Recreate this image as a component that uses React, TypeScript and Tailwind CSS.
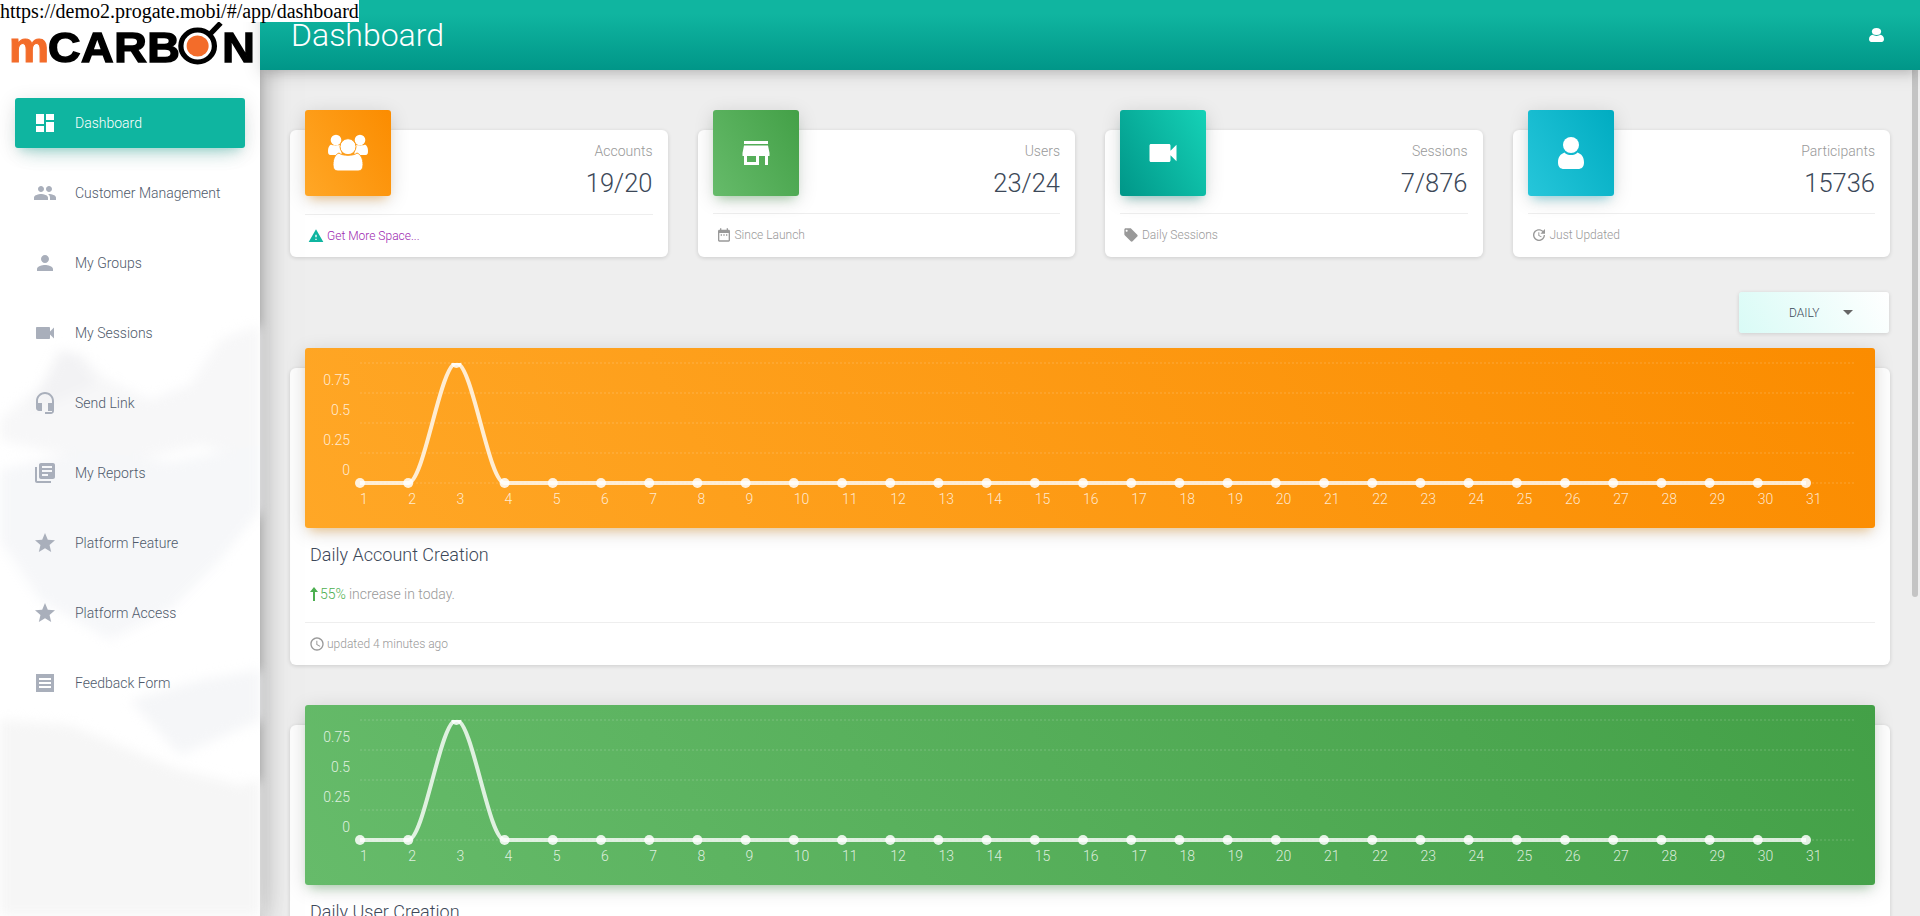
import type { ReactNode } from "react";

const mi = {
  dashboard: "M3 13h8V3H3v10zm0 8h8v-6H3v6zm10 0h8V11h-8v10zm0-18v6h8V3h-8z",
  people:
    "M16 11c1.66 0 2.99-1.34 2.99-3S17.66 5 16 5c-1.66 0-3 1.34-3 3s1.34 3 3 3zm-8 0c1.66 0 2.99-1.34 2.99-3S9.66 5 8 5C6.34 5 5 6.34 5 8s1.34 3 3 3zm0 2c-2.33 0-7 1.17-7 3.5V19h14v-2.5c0-2.33-4.67-3.5-7-3.5zm8 0c-.29 0-.62.02-.97.05 1.16.84 1.97 1.97 1.97 3.45V19h6v-2.5c0-2.33-4.67-3.5-7-3.5z",
  person:
    "M12 12c2.21 0 4-1.79 4-4s-1.79-4-4-4-4 1.79-4 4 1.79 4 4 4zm0 2c-2.67 0-8 1.34-8 4v2h16v-2c0-2.66-5.33-4-8-4z",
  video:
    "M17 10.5V7c0-.55-.45-1-1-1H4c-.55 0-1 .45-1 1v10c0 .55.45 1 1 1h12c.55 0 1-.45 1-1v-3.5l4 4v-11l-4 4z",
  headset:
    "M12 1c-4.97 0-9 4.03-9 9v7c0 1.66 1.34 3 3 3h3v-8H5v-2c0-3.87 3.13-7 7-7s7 3.13 7 7v2h-4v8h4v1h-7v2h6c1.66 0 3-1.34 3-3V10c0-4.97-4.03-9-9-9z",
  library:
    "M4 6H2v14c0 1.1.9 2 2 2h14v-2H4V6zm16-4H8c-1.1 0-2 .9-2 2v12c0 1.1.9 2 2 2h12c1.1 0 2-.9 2-2V4c0-1.1-.9-2-2-2zm-1 9H9V9h10v2zm-4 4H9v-2h6v2zm4-8H9V5h10v2z",
  star: "M12 17.27L18.18 21l-1.64-7.03L22 9.24l-7.19-.61L12 2 9.19 8.63 2 9.24l5.46 4.73L5.82 21z",
  form: "M3 3h18v18H3V3zm3 4v2h12V7H6zm0 4v2h12v-2H6zm0 4v2h12v-2H6z",
  store:
    "M20 4H4v2h16V4zm1 10v-2l-1-5H4l-1 5v2h1v6h10v-6h4v6h2v-6h1zm-9 4H6v-4h6v4z",
  calendar:
    "M9 11H7v2h2v-2zm4 0h-2v2h2v-2zm4 0h-2v2h2v-2zm2-7h-1V2h-2v2H8V2H6v2H5c-1.11 0-1.99.9-1.99 2L3 20c0 1.1.89 2 2 2h14c1.1 0 2-.9 2-2V6c0-1.1-.9-2-2-2zm0 16H5V9h14v11z",
  tag: "M21.41 11.58l-9-9C12.05 2.22 11.55 2 11 2H4c-1.1 0-2 .9-2 2v7c0 .55.22 1.05.59 1.42l9 9c.36.36.86.58 1.41.58.55 0 1.05-.22 1.41-.59l7-7c.37-.36.59-.86.59-1.41 0-.55-.23-1.06-.59-1.42zM5.5 7C4.67 7 4 6.33 4 5.5S4.67 4 5.5 4 7 4.67 7 5.5 6.33 7 5.5 7z",
  update:
    "M21 10.12h-6.78l2.74-2.82c-2.73-2.7-7.15-2.8-9.88-.1-2.73 2.71-2.73 7.08 0 9.79s7.15 2.71 9.88 0C18.32 15.65 19 14.08 19 12.1h2c0 1.98-.88 4.55-2.64 6.29-3.51 3.48-9.21 3.48-12.72 0-3.5-3.47-3.53-9.11-.02-12.58s9.14-3.47 12.65 0L21 3v7.12zM12.5 8v4.25l3.5 2.08-.72 1.21L11 13V8h1.5z",
  warning: "M1 21h22L12 2 1 21zm12-3h-2v-2h2v2zm0-4h-2v-4h2v4z",
  clock:
    "M11.99 2C6.47 2 2 6.48 2 12s4.47 10 9.99 10C17.52 22 22 17.52 22 12S17.52 2 11.99 2zM12 20c-4.42 0-8-3.58-8-8s3.58-8 8-8 8 3.58 8 8-3.58 8-8 8zm.5-13H11v6l5.25 3.15.75-1.23-4.5-2.67z",
};

function Mi({ d, className }: { d: string; className?: string }) {
  return (
    <svg viewBox="0 0 24 24" fill="currentColor" fillRule="evenodd" className={className}>
      <path d={d} />
    </svg>
  );
}

/** Glyph-style person, used in the header and on the Participants tile. */
function BustIcon({ className }: { className?: string }) {
  return (
    <svg viewBox="0 0 26 32" preserveAspectRatio="none" fill="currentColor" className={className}>
      <ellipse cx="13" cy="8" rx="8" ry="8" />
      <path d="M6.5 15.5c1.6 1.8 3.9 2.6 6.5 2.6s4.900-.8 6.500-2.600C23.500 17 26 20 26 25.500 26 30 23.500 32 20 32H6C2.500 32 0 30 0 25.500 0 20 2.500 17 6.500 15.500z" />
    </svg>
  );
}

function GroupIcon({ className }: { className?: string }) {
  return (
    <svg viewBox="0 0 40 40" fill="#fff" className={className}>
      <circle cx="8" cy="7" r="5.300" />
      <circle cx="32" cy="7" r="5.300" />
      <path d="M3 11.500c1.500 1.200 8 1.200 9 0L14 22H2.500C.5 22 0 20.500 0 18c0-3 1-5.500 3-6.500z" />
      <path d="M37 11.500c-1.500 1.200-8 1.200-9 0L26 22h11.500c2 0 2.500-1.500 2.500-4 0-3-1-5.500-3-6.500z" />
      <path d="M11 20c3 3 15 3 18 0 4 1.500 6 6 6 11.500 0 4.500-2 6.500-5 6.500H10c-3 0-5-2-5-6.500C5 26 7 21.500 11 20z" stroke="#fe9b14" />
      <circle cx="20" cy="13.700" r="8" stroke="#fe9b14" />
    </svg>
  );
}

function SidebarBackdrop() {
  return (
    <svg
      viewBox="0 0 260 916"
      preserveAspectRatio="none"
      className="absolute inset-0 h-full w-full blur-[6px]"
    >
      <path d="M0 420 60 370 80 352 105 378 150 400 190 385 220 340 260 325V460L200 445 110 465 0 440z" fill="#f7f7f8" />
      <path d="M60 350 78 355 95 385 60 400 30 410z" fill="#f2f2f4" />
      <path d="M0 470 90 450 170 462 260 445V510L220 560 170 610 110 640 40 600 0 540z" fill="#f6f7f9" />
      <path d="M130 700 180 755 260 720V670L200 680z" fill="#f5f6f8" />
      <path d="M0 720 70 725 180 770 240 785 260 780V916H0z" fill="#f6f6f6" />
    </svg>
  );
}

type NavItem = { label: string; icon: string; active?: boolean };

const navItems: NavItem[] = [
  { label: "Dashboard", icon: mi.dashboard, active: true },
  { label: "Customer Management", icon: mi.people },
  { label: "My Groups", icon: mi.person },
  { label: "My Sessions", icon: mi.video },
  { label: "Send Link", icon: mi.headset },
  { label: "My Reports", icon: mi.library },
  { label: "Platform Feature", icon: mi.star },
  { label: "Platform Access", icon: mi.star },
  { label: "Feedback Form", icon: mi.form },
];

function Logo() {
  return (
    <div className="h-[78px] bg-white pl-[9px] pt-[27px]">
      <div className="flex origin-left scale-x-[1.048] items-start font-['Liberation_Sans',sans-serif] text-[43px] leading-[40px] font-bold">
        <span className="tracking-[-1px] text-[#f36c2a] [-webkit-text-stroke:1px_#f36c2a]">m</span>
        <span className="tracking-[0.5px] text-black [-webkit-text-stroke:1.500px_black]">CARB</span>
        <svg viewBox="0 0 50 50" className="-mx-[5px] -mt-[11px] h-[50px] w-[50px] shrink-0">
          <circle cx="22" cy="30" r="16" fill="none" stroke="#000" strokeWidth="5" />
          <circle cx="22" cy="30" r="10.500" fill="#f36c2a" />
          <path d="M33 19 44 7" stroke="#000" strokeWidth="5" />
        </svg>
        <span className="text-black [-webkit-text-stroke:1.500px_black]">N</span>
      </div>
    </div>
  );
}

function Sidebar() {
  return (
    <aside className="relative z-10 flex h-full w-[260px] shrink-0 flex-col bg-white shadow-[0_16px_38px_-12px_rgba(0,0,0,0.56),0_4px_25px_0_rgba(0,0,0,0.12),0_8px_10px_-5px_rgba(0,0,0,0.2)]">
      <SidebarBackdrop />
      <div className="relative">
        <Logo />
        <nav className="flex flex-col gap-5 px-[15px] pt-5">
          {navItems.map((item) => (
            <a
              key={item.label}
              className={`flex h-[50px] items-center rounded-[3px] pl-[18px] text-sm font-light ${
                item.active
                  ? "bg-[#0fb5a0] text-white shadow-[0_12px_20px_-10px_rgba(15,181,160,0.28),0_4px_20px_0_rgba(0,0,0,0.12),0_7px_8px_-5px_rgba(15,181,160,0.2)]"
                  : "text-[#4f5a6b]"
              }`}
            >
              <Mi
                d={item.icon}
                className={`h-6 w-6 shrink-0 ${item.active ? "text-white" : "text-[#a9afbb]"}`}
              />
              <span className="ml-[18px]">{item.label}</span>
            </a>
          ))}
        </nav>
      </div>
    </aside>
  );
}

type StatCardProps = {
  tile: ReactNode;
  tileClass: string;
  label: string;
  value: string;
  footerIcon: ReactNode;
  footer: ReactNode;
  tall?: boolean;
};

function StatCard({ tile, tileClass, label, value, footerIcon, footer, tall }: StatCardProps) {
  return (
    <div className="rounded-md bg-white px-[15px] shadow-[0_1px_4px_0_rgba(0,0,0,0.14)]">
      <div className={`flex justify-between ${tall ? "h-[84px]" : "h-[83px]"}`}>
        <div
          className={`-mt-5 flex h-[86px] w-[86px] items-center justify-center rounded-[3px] ${tileClass}`}
        >
          {tile}
        </div>
        <div className="pt-[11px] text-right">
          <p className="text-sm leading-5 font-light text-[#999]">{label}</p>
          <p className="mt-[5px] text-[25.5px] leading-[34px] font-light text-[#3c4858]">{value}</p>
        </div>
      </div>
      <div className="flex h-[43px] items-center border-t border-[#eee] pl-[3px] text-xs font-light text-[#999]">
        {footerIcon}
        <span className="ml-[3px]">{footer}</span>
      </div>
    </div>
  );
}

const xLabels = Array.from({ length: 31 }, (_, i) => i + 1);
const gridY = [15, 45, 75, 105, 135];
const yLabels: [string, number][] = [
  ["0.75", 32],
  ["0.5", 62],
  ["0.25", 92],
  ["0", 122],
];

function LineChart({ id }: { id: string }) {
  const x = (i: number) => 55 + i * 48.2;
  return (
    <svg viewBox="0 0 1570 180" className="h-[180px] w-full">
      <defs>
        <clipPath id={id}>
          <rect x="0" y="15" width="1570" height="165" />
        </clipPath>
      </defs>
      {gridY.map((y) => (
        <line
          key={y}
          x1="55"
          x2="1550"
          y1={y}
          y2={y}
          stroke="#fff"
          strokeOpacity="0.2"
          strokeDasharray="2 2"
        />
      ))}
      {yLabels.map(([t, y]) => (
        <text key={t} x="45" y={y + 5} textAnchor="end" fontSize="14" fontWeight="300" fill="#fff" fillOpacity="0.8">
          {t}
        </text>
      ))}
      {xLabels.map((n, i) => (
        <text key={n} x={x(i)} y="156" fontSize="14" fontWeight="300" fill="#fff" fillOpacity="0.8">
          {n}
        </text>
      ))}
      <g clipPath={`url(#${id})`}>
        <path
          d={`M${x(0)} 135L${x(1)} 135C${x(1) + 16} 135 ${x(2) - 16} 15 ${x(2)} 15C${x(2) + 16} 15 ${x(3) - 16} 135 ${x(3)} 135L${x(30)} 135`}
          fill="none"
          stroke="#fff"
          strokeOpacity="0.8"
          strokeWidth="4"
        />
        {xLabels.map((n, i) => (
          <circle key={n} cx={x(i)} cy={n === 3 ? 15 : 135} r="5" fill="#fff" fillOpacity="0.85" />
        ))}
      </g>
    </svg>
  );
}

function ChartCard({
  id,
  panelClass,
  title,
}: {
  id: string;
  panelClass: string;
  title: string;
}) {
  return (
    <div className="mb-[60px] flow-root rounded-md bg-white px-[15px] shadow-[0_1px_4px_0_rgba(0,0,0,0.14)]">
      <div className={`-mt-5 h-[180px] rounded-[3px] ${panelClass}`}>
        <LineChart id={id} />
      </div>
      <h4 className="mt-[15px] pl-[5px] text-lg leading-6 font-light text-[#3c4858]">{title}</h4>
      <p className="mt-[17px] flex items-center pl-[5px] text-sm leading-5 font-light text-[#999]">
        <svg viewBox="0 0 8 14" fill="#4caf50" className="h-[14px] w-2">
          <path d="M4 0 8 5H5V14H3V5H0z" />
        </svg>
        <span className="ml-[2px] text-[#4caf50]">55%</span>
        <span className="ml-[3px]">increase in today.</span>
      </p>
      <div className="mt-[18px] flex h-[43px] items-center border-t border-[#eee] pl-[4px] text-xs font-light text-[#999]">
        <Mi d={mi.clock} className="h-4 w-4 text-[#999]" />
        <span className="ml-[2px]">updated 4 minutes ago</span>
      </div>
    </div>
  );
}

export default function App() {
  return (
    <div className="relative flex h-[916px] overflow-hidden bg-[#eee] font-['Roboto',sans-serif]">
      <div className="absolute top-0 left-0 z-30 bg-white font-['Liberation_Serif',serif] text-[20px] leading-[22px] whitespace-nowrap text-black">
        https://demo2.progate.mobi/#/app/dashboard
      </div>

      <Sidebar />

      <main className="flex min-w-0 flex-1 flex-col">
        <header className="relative z-20 flex h-[70px] shrink-0 items-center justify-between bg-[linear-gradient(180deg,#10b5a0_20%,#009688)] pr-[36px] pl-[31px] shadow-[0_4px_18px_0_rgba(0,0,0,0.12),0_7px_10px_-5px_rgba(0,0,0,0.15)]">
          <h1 className="text-[32px] leading-10 font-light text-white">Dashboard</h1>
          <BustIcon className="h-[14px] w-[15px] text-white" />
        </header>

        <div className="px-[30px] pt-[60px]">
          <div className="grid grid-cols-4 gap-[30px]">
            <StatCard
              tall
              tileClass="bg-[linear-gradient(60deg,#ffa726,#fb8c00)] shadow-[0_4px_20px_0_rgba(0,0,0,0.14),0_7px_10px_-5px_rgba(255,152,0,0.4)]"
              tile={<GroupIcon className="h-10 w-10" />}
              label="Accounts"
              value="19/20"
              footerIcon={<Mi d={mi.warning} className="h-4 w-4 text-[#0fb5a0]" />}
              footer={<span className="text-[#9c27b0]">Get More Space...</span>}
            />
            <StatCard
              tileClass="bg-[linear-gradient(60deg,#66bb6a,#43a047)] shadow-[0_4px_20px_0_rgba(0,0,0,0.14),0_7px_10px_-5px_rgba(76,175,80,0.4)]"
              tile={<Mi d={mi.store} className="h-9 w-9 text-white" />}
              label="Users"
              value="23/24"
              footerIcon={<Mi d={mi.calendar} className="h-4 w-4 text-[#999]" />}
              footer="Since Launch"
            />
            <StatCard
              tileClass="bg-[linear-gradient(60deg,#009688,#15d2b7)] shadow-[0_4px_20px_0_rgba(0,0,0,0.14),0_7px_10px_-5px_rgba(0,150,136,0.4)]"
              tile={<Mi d={mi.video} className="h-9 w-9 text-white" />}
              label="Sessions"
              value="7/876"
              footerIcon={<Mi d={mi.tag} className="h-4 w-4 text-[#999]" />}
              footer="Daily Sessions"
            />
            <StatCard
              tileClass="bg-[linear-gradient(60deg,#26c6da,#00acc1)] shadow-[0_4px_20px_0_rgba(0,0,0,0.14),0_7px_10px_-5px_rgba(0,188,212,0.4)]"
              tile={<BustIcon className="h-8 w-[26px] text-white" />}
              label="Participants"
              value="15736"
              footerIcon={<Mi d={mi.update} className="h-4 w-4 text-[#999]" />}
              footer="Just Updated"
            />
          </div>

          <div className="mt-[35px] mb-[35px] flex justify-end">
            <button
              type="button"
              className="mr-px flex h-[41px] w-[150px] items-center rounded-[3px] bg-[linear-gradient(60deg,#d9fbf6,#fff)] pl-[50px] text-xs font-light text-[#3c4858] shadow-[0_1px_4px_0_rgba(0,0,0,0.14)]"
            >
              DAILY
              <span className="ml-[23px] h-0 w-0 border-x-[5px] border-t-[5px] border-x-transparent border-t-[#666]" />
            </button>
          </div>

          <ChartCard
            id="clip-accounts"
            title="Daily Account Creation"
            panelClass="bg-[linear-gradient(60deg,#ffa726,#fb8c00)] shadow-[0_4px_20px_0_rgba(0,0,0,0.14),0_7px_10px_-5px_rgba(255,152,0,0.4)]"
          />
          <ChartCard
            id="clip-users"
            title="Daily User Creation"
            panelClass="bg-[linear-gradient(60deg,#66bb6a,#43a047)] shadow-[0_4px_20px_0_rgba(0,0,0,0.14),0_7px_10px_-5px_rgba(76,175,80,0.4)]"
          />
        </div>
      </main>

      {/* scrollbar overlay */}
      <div className="absolute top-[70px] right-[2px] z-10 h-[527px] w-[6px] rounded-b-[3px] bg-[#c4c4c4]" />
    </div>
  );
}
